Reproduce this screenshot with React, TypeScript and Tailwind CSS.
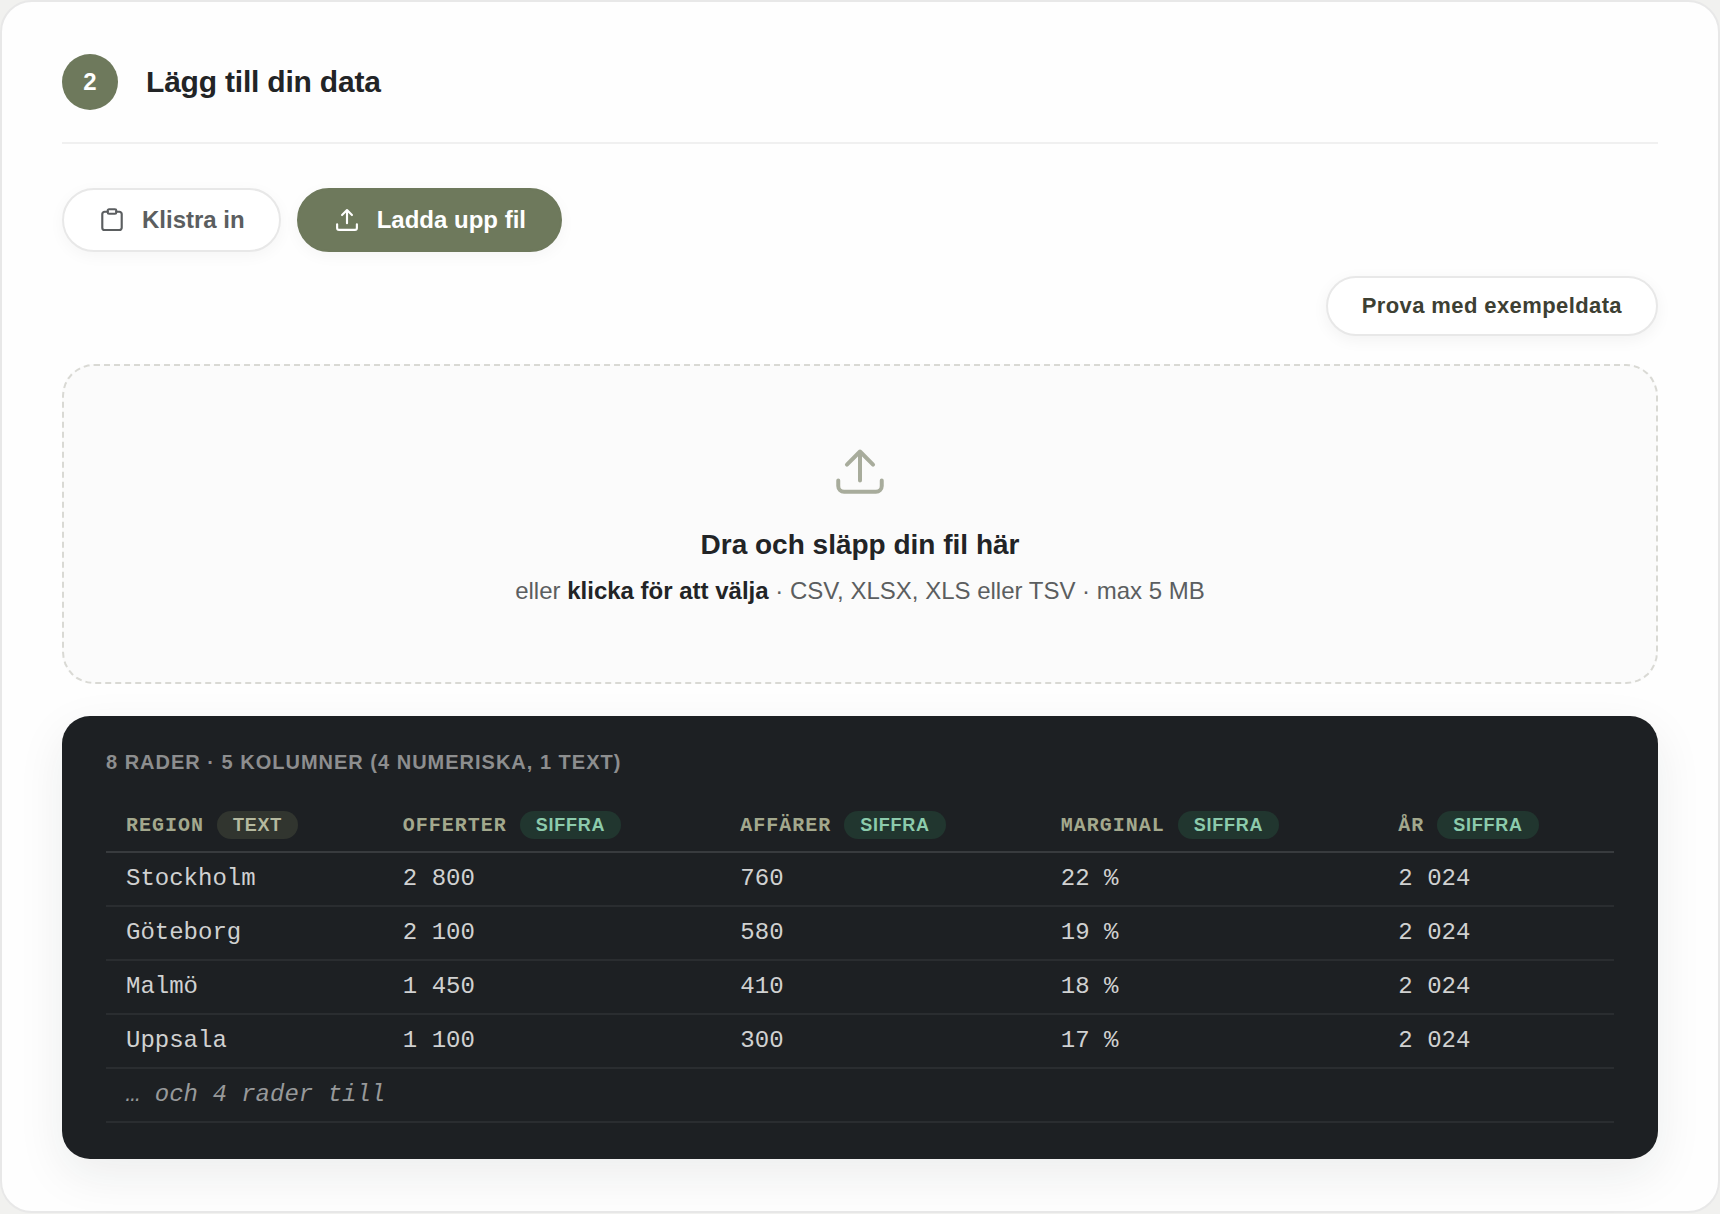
import React from "react";

type ColumnKind = "text" | "siffra";

const columns: { name: string; kind: ColumnKind }[] = [
  { name: "Region", kind: "text" },
  { name: "Offerter", kind: "siffra" },
  { name: "Affärer", kind: "siffra" },
  { name: "Marginal", kind: "siffra" },
  { name: "År", kind: "siffra" },
];

const rows = [
  ["Stockholm", "2 800", "760", "22 %", "2 024"],
  ["Göteborg", "2 100", "580", "19 %", "2 024"],
  ["Malmö", "1 450", "410", "18 %", "2 024"],
  ["Uppsala", "1 100", "300", "17 %", "2 024"],
];

const iconProps = {
  fill: "none",
  stroke: "currentColor",
  strokeLinecap: "round",
  strokeLinejoin: "round",
  "aria-hidden": true,
} as const;

function ClipboardIcon() {
  return (
    <svg viewBox="-0.5 -0.5 17 17" strokeWidth="1.3" className="size-7" {...iconProps}>
      <path d="M5.4 3H3.5A1.4 1.4 0 0 0 2.1 4.4V12.7A1.4 1.4 0 0 0 3.5 14.1h9a1.4 1.4 0 0 0 1.4-1.4V4.4A1.4 1.4 0 0 0 12.5 3h-1.9" />
      <rect x="5.4" y="1.5" width="5.2" height="2.7" rx="0.8" />
    </svg>
  );
}

function UploadIcon() {
  return (
    <svg viewBox="-0.5 -0.5 17 17" strokeWidth="1.3" className="size-7" {...iconProps}>
      <path d="M8 10V2M5 5l3-3 3 3" />
      <path d="M2 10.6V12.8A1.2 1.2 0 0 0 3.2 14h9.6a1.2 1.2 0 0 0 1.2-1.2V10.6" />
    </svg>
  );
}

function DropIcon() {
  return (
    <svg viewBox="0 0 16 16" strokeWidth="1.1" className="size-[58px] text-[#a8ac9c]" {...iconProps}>
      <path d="M8 9.8V1.8M4.4 5.4 8 1.8l3.6 3.6" />
      <path d="M2 9.8v1.5a1.6 1.6 0 0 0 1.6 1.6h8.8a1.6 1.6 0 0 0 1.6-1.6V9.8" />
    </svg>
  );
}

function TypeChip({ kind }: { kind: ColumnKind }) {
  const tone = kind === "text" ? "bg-[#31352f] text-[#b5b99f]" : "bg-[#21362f] text-[#8ccbac]";
  return (
    <span
      className={`ml-[13px] inline-block rounded-full px-4 text-[18px] leading-7 tracking-[0.04em] font-['Liberation_Sans',sans-serif] ${tone}`}
    >
      {kind}
    </span>
  );
}

export default function App() {
  return (
    <main className="bg-[#f1f1ef] pb-0.5 font-['Liberation_Sans',Arial,sans-serif] text-[#222426]">
      <section className="rounded-[32px] border-2 border-[#e8e8e8] bg-[#fefefe] px-[60px] py-[52px]">
        <header className="flex items-center gap-7 border-b-2 border-[#f0f0f0] pb-8">
          <span className="flex size-14 items-center justify-center rounded-full bg-[#6e795c] text-2xl font-bold text-white">
            2
          </span>
          <h2 className="text-[30px] leading-9 font-bold tracking-[-0.2px]">Lägg till din data</h2>
        </header>

        <div className="mt-11 flex gap-4">
          <button
            type="button"
            className="flex h-16 items-center gap-4 rounded-full border-2 border-[#e8e8e8] bg-white px-[34px] text-2xl font-bold text-[#5b5e60] shadow-[0_4px_16px_rgba(0,0,0,0.04)]"
          >
            <ClipboardIcon />
            Klistra in
          </button>
          <button
            type="button"
            className="flex h-16 items-center gap-4 rounded-full border-2 border-[#6e795c] bg-[#6e795c] px-[34px] text-2xl font-bold text-white shadow-[0_4px_16px_rgba(0,0,0,0.04)]"
          >
            <UploadIcon />
            Ladda upp fil
          </button>
        </div>

        <div className="mt-6 flex justify-end">
          <button
            type="button"
            className="h-[60px] rounded-full border-2 border-[#e8e8e8] bg-white px-[34px] pb-0.5 text-[22px] font-bold tracking-[0.4px] text-[#3d4033] shadow-[0_4px_16px_rgba(0,0,0,0.05)]"
          >
            Prova med exempeldata
          </button>
        </div>

        <button
          type="button"
          className="mt-7 flex h-80 w-full flex-col items-center justify-center rounded-[32px] border-2 border-dashed border-[#d9d9d4] bg-[#fbfbfb] pt-1.5"
        >
          <DropIcon />
          <span className="mt-[22px] text-[28px] leading-10 font-bold">Dra och släpp din fil här</span>
          <span className="mt-2 text-2xl leading-9 text-[#5b5e60]">
            eller <strong className="text-[#222426]">klicka för att välja</strong> · CSV, XLSX, XLS eller TSV · max 5 MB
          </span>
        </button>

        <div className="mt-8 rounded-[28px] bg-[#1d2023] px-11 pt-[34px] pb-9 shadow-[0_16px_48px_rgba(30,33,36,0.08)]">
          <p className="text-xl leading-6 font-bold tracking-[1px] text-[#8d8e8f] uppercase">
            8 rader · 5 kolumner (4 numeriska, 1 text)
          </p>
          <table className="mt-[26px] w-full text-left font-['Liberation_Mono',monospace] text-2xl text-[#d0d1d1]">
            <thead>
              <tr className="border-b-2 border-[#383b3e]">
                {columns.map((column) => (
                  <th
                    key={column.name}
                    scope="col"
                    className="h-[52px] px-5 text-xl font-bold tracking-[1px] whitespace-nowrap text-[#a3a88d] uppercase"
                  >
                    {column.name}
                    <TypeChip kind={column.kind} />
                  </th>
                ))}
              </tr>
            </thead>
            <tbody>
              {rows.map((row) => (
                <tr key={row[0]} className="border-b-2 border-[#2a2d30]">
                  {row.map((cell, index) => (
                    <td key={index} className="h-[54px] px-5">
                      {cell}
                    </td>
                  ))}
                </tr>
              ))}
              <tr className="border-b-2 border-[#2a2d30] text-[#97999a] italic">
                <td colSpan={5} className="h-[54px] px-5">
                  … och 4 rader till
                </td>
              </tr>
            </tbody>
          </table>
        </div>
      </section>
    </main>
  );
}
